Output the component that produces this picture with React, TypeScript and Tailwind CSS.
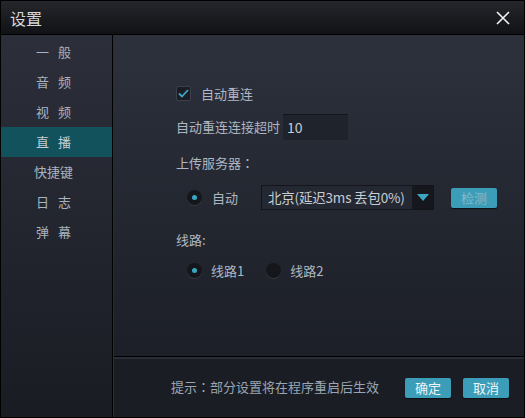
import React from "react";

const font = { fontFamily: '"Noto Sans CJK SC", "Microsoft YaHei", sans-serif' };
const tc = { fontFamily: '"Noto Sans CJK TC", sans-serif' };

const navItems = [
  ["一", "般"],
  ["音", "频"],
  ["视", "频"],
  ["直", "播"],
  ["快捷键"],
  ["日", "志"],
  ["弹", "幕"],
];

function Radio({ checked }: { checked?: boolean }) {
  return (
    <span className="flex h-[15px] w-[15px] items-center justify-center rounded-full bg-[#14161b] shadow-[0_1px_0_#353944]">
      {checked && <span className="h-[5px] w-[5px] rounded-full bg-[#3aa6c2]" />}
    </span>
  );
}

function Button({ children, dim }: { children: React.ReactNode; dim?: boolean }) {
  return (
    <button
      className={`flex h-[20px] w-[46px] items-center justify-center rounded-[2px] bg-[#3b9db7] text-[13px] shadow-[0_1px_1px_#0d0f13] ${
        dim ? "text-[#86b9ca]" : "text-[#eef4f7]"
      }`}
    >
      {children}
    </button>
  );
}

export default function App() {
  return (
    <div className="flex h-[418px] w-[525px] flex-col border border-black bg-black text-[13px]" style={font}>
      {/* Title bar */}
      <div className="flex h-[34px] shrink-0 items-center justify-between border-b border-black bg-gradient-to-b from-[#26272c] to-[#111215] pl-[9px] pr-[14px]">
        <span className="text-[16px] text-[#d6d8dc]">设置</span>
        <svg width="14" height="14" viewBox="0 0 14 14">
          <path d="M1 1L13 13M13 1L1 13" stroke="#f2f2f2" strokeWidth="1.6" />
        </svg>
      </div>

      <div className="flex min-h-0 flex-1">
        {/* Sidebar */}
        <div className="flex w-[111px] shrink-0 flex-col bg-gradient-to-b from-[#2c2f3a] to-[#1a1c24] pt-[2px]">
          {navItems.map((item, i) => (
            <div
              key={i}
              className={`flex h-[30px] items-center justify-center gap-[9px] pr-[6px] ${
                i === 3 ? "bg-[#11525c] text-[#c2ced6]" : "text-[#aab3bf]"
              }`}
            >
              {item.map((c) => (
                <span key={c}>{c}</span>
              ))}
            </div>
          ))}
        </div>
        <div className="w-[1px] bg-black" />
        <div className="w-[1px] bg-[#2a2d36]" />

        {/* Right panel */}
        <div className="flex flex-1 flex-col">
          <div className="flex flex-1 flex-col bg-gradient-to-b from-[#2d313c] to-[#1c1f27] pl-[62px] pt-[49px] text-[#aeb7c3]">
            <div className="flex items-center gap-[10px]">
              <span className="flex h-[15px] w-[15px] items-center justify-center rounded-[2px] border border-[#3b404b] bg-[#1a1d24]">
                <svg width="11" height="9" viewBox="0 0 11 9">
                  <path d="M1 4.5L4 7.5L10 1" stroke="#3ea8c4" strokeWidth="1.8" fill="none" />
                </svg>
              </span>
              <span>自动重连</span>
            </div>
            <div className="mt-[10px] flex items-center gap-[3px]">
              <span>自动重连连接超时</span>
              <span className="flex h-[26px] w-[65px] items-center border-t border-[#15171c] bg-[#1f232c] pl-[4px] text-[14px] text-[#c5ccd5]">
                10
              </span>
            </div>
            <div className="mt-[13px]">
              上传服务器<span style={tc}>：</span>
            </div>
            <div className="mt-[13px] flex items-center pl-[11px]">
              <Radio checked />
              <span className="ml-[10px]">自动</span>
              <div className="ml-[23px] flex h-[25px] w-[173px] border border-[#13151a] bg-[#242832]">
                <span className="flex flex-1 items-center pl-[6px] text-[13.5px] tracking-[-0.2px] text-[#c8cdd4]">
                  北京(延迟3ms 丢包0%)
                </span>
                <span className="flex w-[21px] items-center justify-center bg-[#15171d]">
                  <svg width="12" height="8" viewBox="0 0 12 8">
                    <path d="M0 0H12L6 7Z" fill="#3aa6c2" />
                  </svg>
                </span>
              </div>
              <span className="ml-[17px]">
                <Button dim>检测</Button>
              </span>
            </div>
            <div className="mt-[20px]">线路:</div>
            <div className="mt-[11px] flex items-center pl-[11px]">
              <Radio checked />
              <span className="ml-[9px]">线路1</span>
              <span className="ml-[22px]">
                <Radio />
              </span>
              <span className="ml-[9px]">线路2</span>
            </div>
          </div>
          <div className="h-[1px] bg-black" />
          <div className="h-[2px] bg-[#2a2d36]" />
          <div className="flex h-[58px] items-center bg-[#1b1d25] pl-[57px] pr-[15px] text-[#9aa5b3]">
            <span className="flex-1 pb-[2px]">
              提示<span style={tc}>：</span>部分设置将在程序重启后生效
            </span>
            <div className="flex gap-[12px]">
              <Button>确定</Button>
              <Button>取消</Button>
            </div>
          </div>
        </div>
      </div>
    </div>
  );
}
